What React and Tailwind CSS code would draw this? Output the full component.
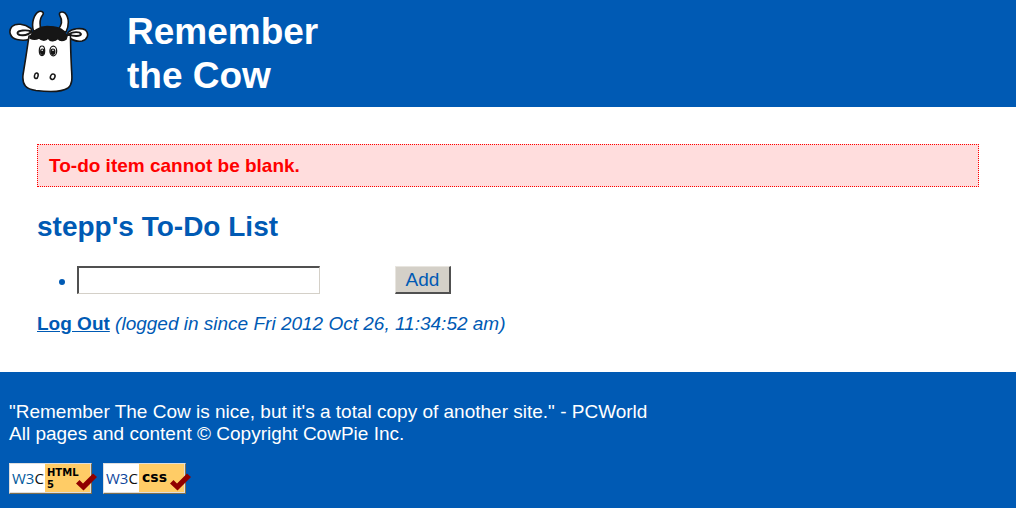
function CowLogo() {
  return (
    <svg
      viewBox="0 0 80 84"
      className="h-[84px] w-20 shrink-0"
      role="img"
      aria-label="Cow"
      fill="#fff"
      stroke="#161616"
      strokeWidth="1.6"
      strokeLinejoin="round"
      strokeLinecap="round"
    >
      <path d="M24.500 21C22 13 25 4 30 1.500C33 .5 35 2.500 34 4.500C30 9 30.500 14 32 20Z" />
      <path d="M49 20C53.500 14 53.500 10 51 6C49 2.500 52.500 .8 56 3C60.500 8 60 16 57 22Z" />
      <path d="M22 18.500C15 13.500 7 13 3 16.500C-1 21 1 28 8 29.500C15 31 21 30 24 26Z" />
      <path d="M59 22.500C63 18.500 72 17.500 76.500 20C80.500 24 78.500 29.500 73 31C68 32 63 30 59 27Z" />
      <path d="M22.500 21.500C17 19.500 9 20.500 8.500 23C9 26 18 26.500 22.500 21.500Z" strokeWidth="1.9" />
      <path d="M60 24C64 21.500 71 21.500 72 24C71.500 26.500 64.500 27 60 24Z" strokeWidth="1.900" />
      <path d="M20 26C18 40 16 53 14 65C13 75 17 79 27 80.500C39 82 53 82 59 78C64 74 63 67 62.500 59C62 49 61.500 39 61.500 25Z" />
      <path d="M21 28C23 21 31 16.500 38 16.500C47 16.500 54 18 58 26L57 29C54 31 51 31 49 28.500C45 32 41 31 39 28C36 31.500 32 30 30 28C27 29.500 24 29.500 21 28Z" fill="#161616" />
      <ellipse cx="33" cy="40.800" rx="2.700" ry="4.800" strokeWidth="1.200" />
      <ellipse cx="44.300" cy="41" rx="3.400" ry="4.900" strokeWidth="1.200" />
      <ellipse cx="33.300" cy="41.800" rx="2.300" ry="3.200" fill="#161616" stroke="none" />
      <ellipse cx="43.900" cy="41.800" rx="2.600" ry="3.200" fill="#161616" stroke="none" />
      <circle cx="33.200" cy="40.200" r=".8" stroke="none" />
      <circle cx="44" cy="40.200" r=".8" stroke="none" />
      <ellipse cx="27.300" cy="65.700" rx="1.800" ry="2.800" transform="rotate(12 27.300 65.700)" strokeWidth="1.500" />
      <ellipse cx="43.700" cy="66.700" rx="2.200" ry="2.800" transform="rotate(25 43.700 66.700)" strokeWidth="1.500" />
    </svg>
  );
}

function Badge({ label, blue, children }) {
  return (
    <a href="#validate" aria-label={label}>
      <svg viewBox="0 0 88 31" className="block h-[31px] w-[88px]">
        <path d="M0 0H83V31H0Z" fill="#dedede" />
        <path d="M0 31L1 30H82V1L83 0V31Z" fill="#806f4c" />
        <path d="M1 1H37V29H1Z" fill="#fff" />
        <path d="M36 1H81V29H36Z" fill="#fc6" />
        <text x="3" y="21" fontFamily="'Open Sans', sans-serif" fontSize="15" fill={blue}>
          W3<tspan fill="#111">C</tspan>
        </text>
        {children}
        <path d="M67 20.500L70.500 17L74 20.500L84 10.500L88 14L74.500 27.500Z" fill="#900000" />
      </svg>
    </a>
  );
}

export default function App() {
  return (
    <div className="bg-white font-['Liberation_Sans',Arial,sans-serif] text-[19px] leading-[22px] text-[#005ab4]">
      <header className="flex gap-[38px] bg-[#005ab4] px-[9px] pt-[10px] pb-[9px] text-white">
        <CowLogo />
        <h1 className="text-[37px] leading-[44px] font-bold">
          Remember
          <br />
          the Cow
        </h1>
      </header>

      <main className="px-[37px] py-[37px]">
        <p role="alert" className="border border-dotted border-[#f00] bg-[#fdd] px-[11px] py-[10px] leading-[21px] font-bold text-[#f00]">
          To-do item cannot be blank.
        </p>
        <h2 className="mt-6 text-[28px] leading-8 font-bold">stepp's To-Do List</h2>
        <ul className="mt-[23px] list-disc pl-10">
          <li>
            <form className="flex items-center" onSubmit={(e) => e.preventDefault()}>
              <input
                type="text"
                aria-label="New to-do item"
                className="h-7 w-[243px] border border-t-2 border-l-2 border-t-[#505050] border-r-[#d4d0c8] border-b-[#d4d0c8] border-l-[#505050] bg-white px-1 outline-none"
              />
              <button
                type="submit"
                className="ml-[75px] h-7 w-14 border-t border-r-2 border-b-2 border-l border-t-[#e8e5df] border-r-[#505050] border-b-[#505050] border-l-[#e8e5df] bg-[#d4d0c8]"
              >
                Add
              </button>
            </form>
          </li>
        </ul>
        <p className="mt-[19px]">
          <a href="#logout" className="font-bold underline">Log Out</a>{" "}
          <em>(logged in since Fri 2012 Oct 26, 11:34:52 am)</em>
        </p>
      </main>

      <footer className="bg-[#005ab4] px-[9px] pt-[29px] pb-[14px] text-white">
        <p>
          "Remember The Cow is nice, but it's a total copy of another site." - PCWorld
          <br />
          All pages and content © Copyright CowPie Inc.
        </p>
        <div className="mt-[18px] flex gap-[6px]">
          <Badge label="W3C HTML5" blue="#005a9c">
            <g fontFamily="'DejaVu Sans', sans-serif" fontWeight="bold" fontSize="10">
              <text x="38" y="13">HTML</text>
              <text x="38" y="25">5</text>
            </g>
          </Badge>
          <Badge label="W3C CSS" blue="#0c479d">
            <text x="39" y="19" fontFamily="'DejaVu Sans', sans-serif" fontWeight="bold" fontSize="14">css</text>
          </Badge>
        </div>
      </footer>
    </div>
  );
}
